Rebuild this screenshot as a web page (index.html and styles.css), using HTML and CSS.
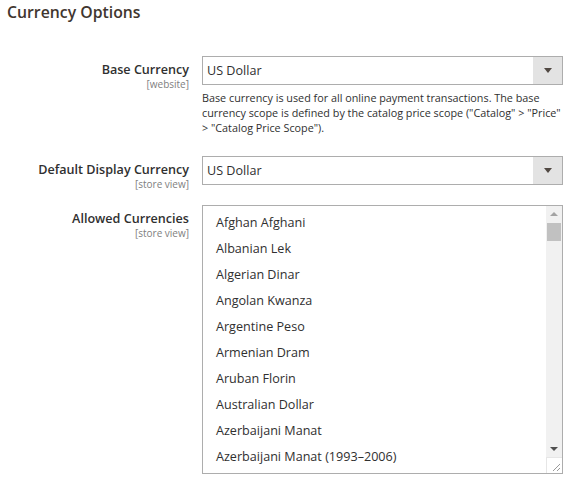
FILE: index.html
```html
<!DOCTYPE html>
<html>
<head>
<meta charset="utf-8">
<link rel="stylesheet" href="styles.css">
</head>
<body>
<div class="page">
  <h2 class="title">Currency Options</h2>
  <div class="rows">
    <div class="row row-base">
      <div class="label"><span class="name">Base Currency</span><span class="scope">[website]</span></div>
      <div class="control">
        <div class="select"><span class="value">US Dollar</span><span class="arrow"><span class="tri"></span></span></div>
        <p class="note">Base currency is used for all online payment transactions. The base currency scope is defined by the catalog price scope ("Catalog" &gt; "Price" &gt; "Catalog Price Scope").</p>
      </div>
    </div>
    <div class="row row-display">
      <div class="label"><span class="name">Default Display Currency</span><span class="scope">[store view]</span></div>
      <div class="control">
        <div class="select"><span class="value">US Dollar</span><span class="arrow"><span class="tri"></span></span></div>
      </div>
    </div>
    <div class="row row-allowed">
      <div class="label"><span class="name">Allowed Currencies</span><span class="scope">[store view]</span></div>
      <div class="control">
        <div class="listbox">
          <ul class="options">
            <li>Afghan Afghani</li>
            <li>Albanian Lek</li>
            <li>Algerian Dinar</li>
            <li>Angolan Kwanza</li>
            <li>Argentine Peso</li>
            <li>Armenian Dram</li>
            <li>Aruban Florin</li>
            <li>Australian Dollar</li>
            <li>Azerbaijani Manat</li>
            <li>Azerbaijani Manat (1993–2006)</li>
          </ul>
          <div class="scrollbar">
            <span class="sb-up"></span>
            <span class="sb-thumb"></span>
            <span class="sb-track"></span>
            <span class="sb-down"></span>
            <span class="resizer">
              <svg width="16" height="16" viewBox="0 0 16 16"><path d="M14 7 L7 14 M14 11 L11 14" stroke="#9a9a9a" stroke-width="1" fill="none"/></svg>
            </span>
          </div>
        </div>
      </div>
    </div>
  </div>
</div>
</body>
</html>
```

FILE: styles.css
```css
* { box-sizing: border-box; }
html, body { margin: 0; padding: 0; background: #fff; }
body { font-family: "Open Sans", "Liberation Sans", sans-serif; color: #303030; }
.page { padding: 0 0 0 7px; width: 574px; }
.title {
  margin: 0;
  padding-top: 1px;
  height: 56px;
  font-size: 15.8px;
  font-weight: 600;
  color: #41362f;
  line-height: 22px;
}
.rows { display: flex; flex-direction: column; }
.row { display: grid; grid-template-columns: 182px 361px; column-gap: 13px; align-items: start; }
.row-base { margin-bottom: 21px; }
.row-display { margin-bottom: 14px; }
.label {
  display: flex; flex-direction: column; align-items: flex-end;
  text-align: right; padding-top: 6px;
}
.name { font-size: 12.6px; font-weight: 600; line-height: 16px; color: #303030; }
.scope { font-size: 10px; line-height: 13px; color: #808080; }
.select {
  display: flex; height: 29px; border: 1px solid #adadad; background: #fff;
}
.value { flex: 1; font-size: 12.6px; line-height: 27px; padding-left: 4px; color: #303030; }
.arrow {
  width: 29px; background: #e3e3e3; display: flex; align-items: center; justify-content: center;
}
.tri {
  width: 0; height: 0;
  border-left: 4px solid transparent; border-right: 4px solid transparent;
  border-top: 5px solid #514943;
}
.note {
  margin: 5px 0 0; font-size: 10.8px; line-height: 15px; color: #303030;
}
.listbox {
  display: flex; height: 269px; border: 1px solid #adadad; background: #fff;
}
.options {
  flex: 1; list-style: none; margin: 0; padding: 4px 0 0 13px; overflow: hidden;
}
.options li { font-size: 12.6px; line-height: 26px; height: 26px; color: #303030; }
.scrollbar {
  width: 16px; display: flex; flex-direction: column; background: #f1f1f1;
}
.sb-up, .sb-down { height: 16px; display: flex; align-items: center; justify-content: center; }
.sb-up::before {
  content: ""; width: 0; height: 0;
  border-left: 4px solid transparent; border-right: 4px solid transparent;
  border-bottom: 4px solid #a3a3a3;
}
.sb-down::before {
  content: ""; width: 0; height: 0;
  border-left: 4px solid transparent; border-right: 4px solid transparent;
  border-top: 4px solid #505050;
}
.sb-thumb { height: 18px; margin: 1px 1px 0 1px; background: #c1c1c1; }
.sb-track { flex: 1; }
.resizer {
  height: 16px; background: #fff; border-top: 1px solid #e6e6e6; border-left: 1px solid #e6e6e6;
  display: block;
}
.resizer svg { display: block; margin: -1px 0 0 -1px; }
```
